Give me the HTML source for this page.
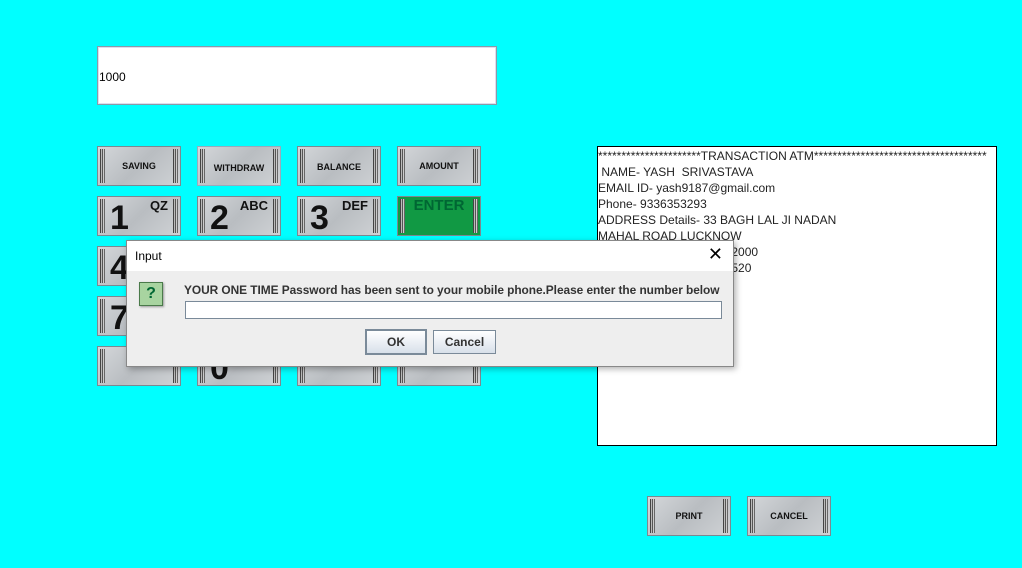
<!DOCTYPE html>
<html><head><style>
body{margin:0;width:1022px;height:568px;background:#00ffff;position:relative;overflow:hidden;font-family:"Liberation Sans",sans-serif}
.abs{position:absolute}
.btn{position:absolute;width:84px;height:40px;box-sizing:border-box;border:1px solid #7c8890;
background:linear-gradient(135deg,#d4d7da 0%,#b9bdc1 50%,#cfd2d5 100%);
font-weight:bold;font-size:9px;color:#111;display:flex;align-items:center;justify-content:center}
.btn:before,.btn:after{content:"";position:absolute;top:2px;bottom:2px;width:5px;
background:linear-gradient(90deg,#444 0 1px,#bbb 1px 2px,#555 2px 3px,#ccc 3px 4px,#666 4px 5px)}
.btn:before{left:2px}.btn:after{right:2px}
.num{font-size:34px;font-weight:900;justify-content:flex-start;padding-left:12px;align-items:flex-end;line-height:34px}
.sup{position:absolute;top:2px;right:12px;font-size:13px;font-weight:900;line-height:14px}
.col1{left:97px}.col2{left:197px}.col3{left:297px}.col4{left:397px}
</style></head><body>
<div class="abs" style="left:97px;top:46px;width:398px;height:57px;background:#fff;border:1px solid #8a9aa8;box-shadow:inset 0 0 0 1px #dde"></div>
<div class="abs" style="left:99px;top:70px;font-size:12px">1000</div>

<div class="btn col1" style="top:146px">SAVING</div>
<div class="btn col2" style="top:146px;border-color:#9ab;padding-top:4px">WITHDRAW</div>
<div class="btn col3" style="top:146px;padding-top:2px">BALANCE</div>
<div class="btn col4" style="top:146px">AMOUNT</div>

<div class="btn num col1" style="top:196px">1<span class="sup">QZ</span></div>
<div class="btn num col2" style="top:196px">2<span class="sup">ABC</span></div>
<div class="btn num col3" style="top:196px">3<span class="sup">DEF</span></div>
<div class="btn col4" style="top:196px;background:#119944;align-items:flex-start;font-size:15px;font-weight:900;color:#063">ENTER</div>

<div class="btn num col1" style="top:246px">4</div>
<div class="btn num col1" style="top:296px">7</div>
<div class="btn col1" style="top:346px"></div>
<div class="btn num col2" style="top:346px">0</div>
<div class="btn col3" style="top:346px"></div>
<div class="btn col4" style="top:346px"></div>

<div class="abs" style="left:597px;top:146px;width:400px;height:300px;background:#fff;border:1px solid #000;font-size:12px;line-height:16px;color:#222;padding:1px 0 0 0;box-sizing:border-box;white-space:pre">**********************TRANSACTION ATM*************************************
 NAME- YASH  SRIVASTAVA
EMAIL ID- yash9187@gmail.com
Phone- 9336353293
ADDRESS Details- 33 BAGH LAL JI NADAN
MAHAL ROAD LUCKNOW
                                      32000
                                      0520</div>

<div class="btn" style="left:647px;top:496px">PRINT</div>
<div class="btn" style="left:747px;top:496px">CANCEL</div>

<div class="abs" style="left:126px;top:240px;width:608px;height:127px;background:#eeeeee;border:1px solid #888;box-sizing:border-box;box-shadow:2px 2px 6px rgba(0,0,0,.3)">
 <div style="height:30px;background:#fff;position:relative">
  <span style="position:absolute;left:8px;top:8px;font-size:12px;color:#000">Input</span>
  <span style="position:absolute;right:10px;top:3px;font-size:18px;color:#000">✕</span>
 </div>
 <div style="position:absolute;left:12px;top:41px;width:24px;height:24px;background:#a8d4a0;border:1px solid #4a7a4a;box-sizing:border-box;color:#063;font-weight:bold;font-size:16px;text-align:center;line-height:22px;box-shadow:1px 1px 2px #999">?</div>
 <div style="position:absolute;left:57px;top:42px;font-size:11.9px;font-weight:bold;color:#333;letter-spacing:-0.05px">YOUR ONE TIME Password has been sent to your mobile phone.Please enter the number below</div>
 <div style="position:absolute;left:58px;top:60px;width:537px;height:18px;background:#fff;border:1px solid #7a8a99;box-sizing:border-box"></div>
 <div style="position:absolute;left:238px;top:88px;width:62px;height:26px;border:2px solid #7a8a99;box-sizing:border-box;background:linear-gradient(#fff,#d8e0ea);font-size:12px;font-weight:bold;color:#333;text-align:center;line-height:22px">OK</div>
 <div style="position:absolute;left:306px;top:89px;width:63px;height:24px;border:1px solid #7a8a99;box-sizing:border-box;background:linear-gradient(#fff,#d8e0ea);font-size:12px;font-weight:bold;color:#333;text-align:center;line-height:22px">Cancel</div>
</div>
</body></html>
